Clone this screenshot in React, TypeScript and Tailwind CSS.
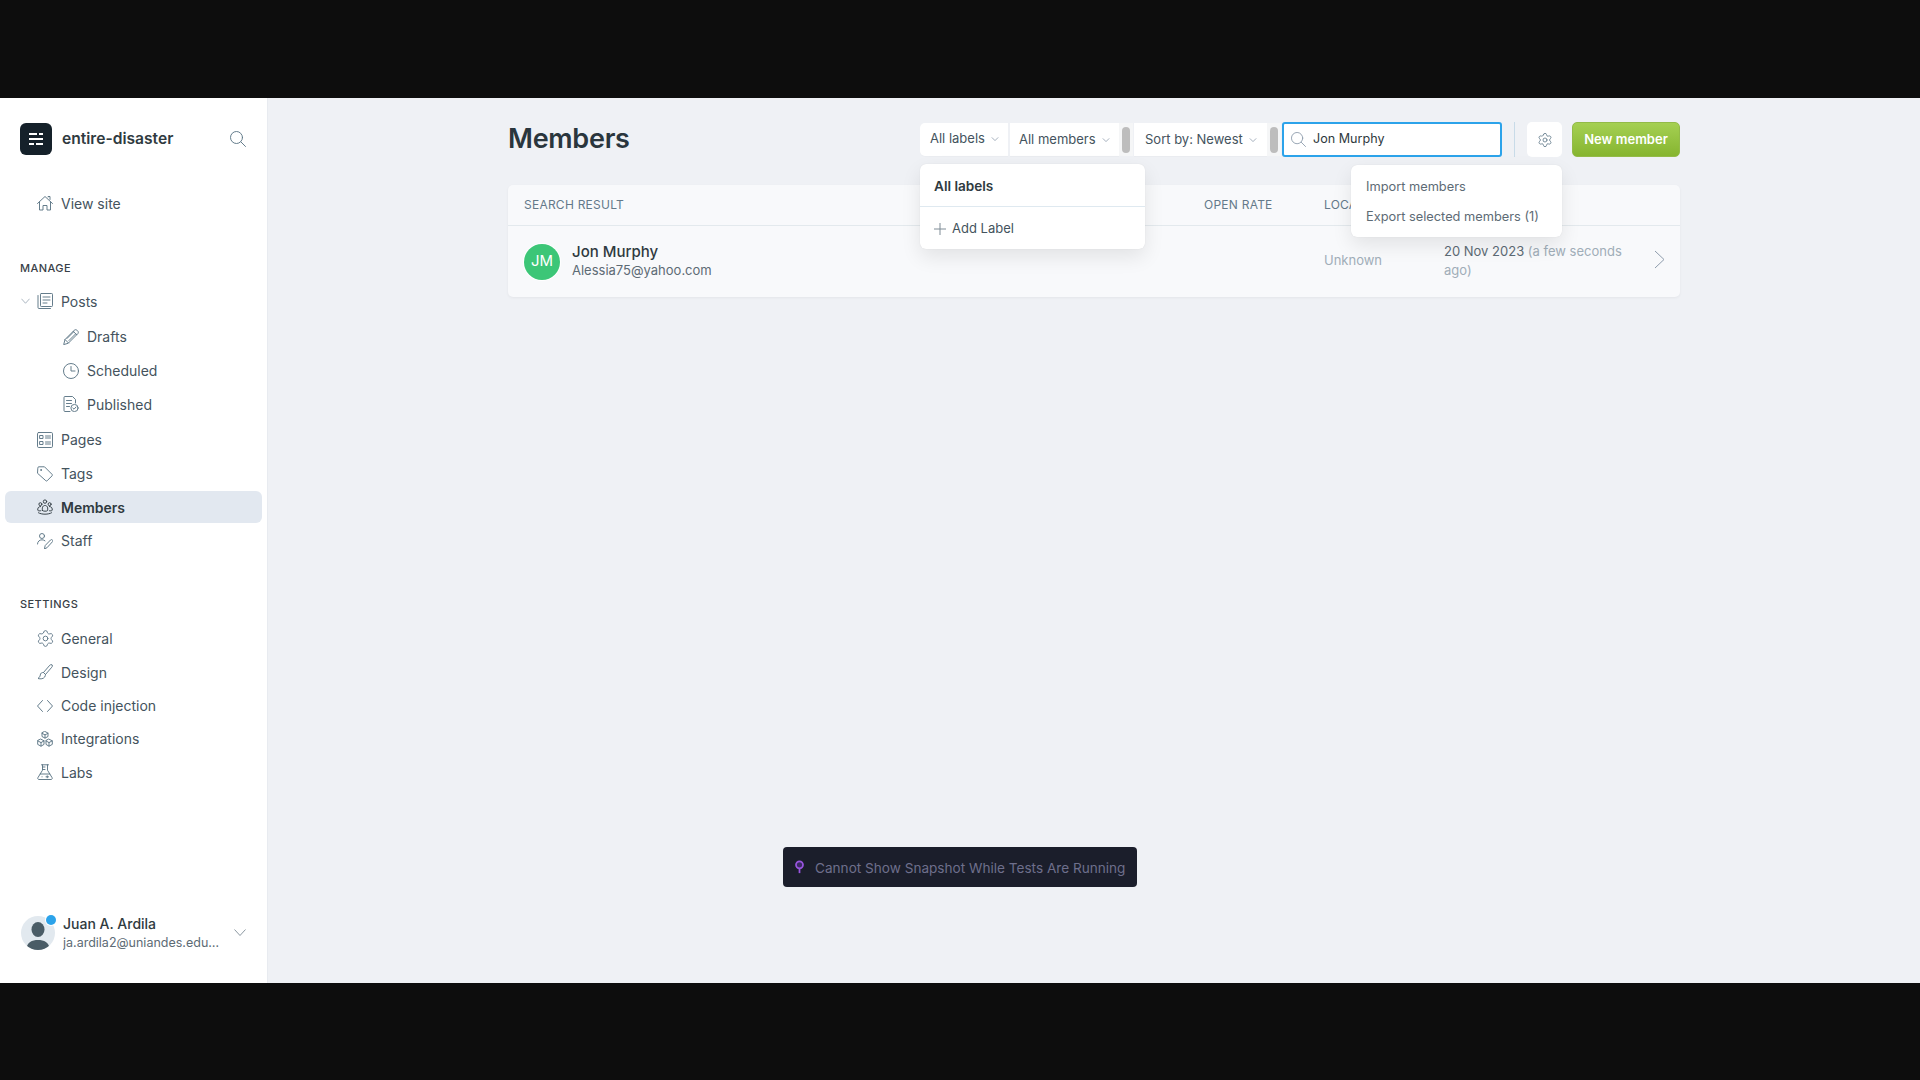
import { useState } from "react";
import { Settings } from "lucide-react";

const font = { fontFamily: "Inter, 'Noto Sans', sans-serif" };

const ic = "h-4 w-4 shrink-0 text-[#5d7686]";

function Icon({ children, className = ic }: { children: React.ReactNode; className?: string }) {
  return (
    <svg viewBox="0 0 16 16" fill="none" stroke="currentColor" strokeWidth="0.95" strokeLinecap="round" strokeLinejoin="round" className={className}>
      {children}
    </svg>
  );
}

function SearchIcon({ className }: { className: string }) {
  return (
    <Icon className={className}>
      <circle cx="6.500" cy="6.500" r="6" />
      <path d="M11 11l4.500 4.500" />
    </Icon>
  );
}

function Caret() {
  return (
    <svg viewBox="0 0 10 10" fill="none" stroke="currentColor" strokeWidth="1" className="h-[8px] w-[8px] text-[#8e9cac]">
      <path d="M1 3l4 4 4-4" />
    </svg>
  );
}

const HomeIcon = () => (
  <Icon>
    <path d="M.5 8.500L8 1.500l7.500 7M2.500 7v8h3.500v-4.500h4V15h3.500V7M11 2V1.500h2v3" />
  </Icon>
);
const PostsIcon = () => (
  <Icon>
    <rect x="3.500" y="0.500" width="12" height="13" rx="0.800" />
    <path d="M1 2.500v12a1 1 0 0 0 1 1h11.500M6 4h7M6 7h7M6 10h4" />
  </Icon>
);
const DraftsIcon = () => (
  <Icon>
    <path d="M.8 15.200l1.200-4.700L11.300 1.200c.7-.7 1.900-.7 2.600 0l.9.9c.7.7.7 1.900 0 2.600L5.500 14z" />
    <path d="M2 10.500L5.500 14M10.200 2.300l3.500 3.500M4 9.500l6.500-6.500M6 11.500L12.500 5" />
  </Icon>
);
const ClockIcon = () => (
  <Icon>
    <circle cx="8" cy="8" r="7.500" />
    <path d="M8 3.500V8h4" />
  </Icon>
);
const PublishedIcon = () => (
  <Icon>
    <path d="M7 15.500H2a1 1 0 0 1-1-1v-13a1 1 0 0 1 1-1h7.500L12.500 3.500V7" />
    <path d="M3.500 4.500h5M3.500 7.500h5M3.500 10.500h3" />
    <circle cx="11.500" cy="12" r="3.600" />
    <path d="M9.800 12l1.200 1.200 2-2.200" />
  </Icon>
);
const PagesIcon = () => (
  <Icon>
    <rect x="0.500" y="0.500" width="15" height="15" rx="1.200" />
    <rect x="3" y="3.500" width="3" height="3" />
    <rect x="3" y="9.500" width="3" height="3" />
    <path d="M8.500 4h5M8.500 6h5M8.500 10h5M8.500 12h5" />
  </Icon>
);
const TagIcon = () => (
  <Icon>
    <path d="M.8 1.800a1 1 0 0 1 1-1h5.700l7.600 7.600a1 1 0 0 1 0 1.400l-4.900 4.900a1 1 0 0 1-1.400 0L.8 7.500z" />
    <circle cx="4" cy="4" r="0.500" />
  </Icon>
);
const MembersIcon = () => (
  <Icon className="h-4 w-4 shrink-0 text-[#2f3a40]">
    <circle cx="8" cy="2.600" r="1.700" />
    <circle cx="3.400" cy="5.200" r="1.500" />
    <circle cx="12.600" cy="5.200" r="1.500" />
    <path d="M5.400 11.500c-.6-4 1-5 2.600-5s3.200 1 2.600 5c-.8 1-4.400 1-5.200 0z" />
    <path d="M3.600 7.500c-2.300 0-3.100 1.800-2.800 3.800.5.600 1.700.700 2.700.500M12.400 7.500c2.300 0 3.100 1.800 2.800 3.800-.5.600-1.700.700-2.700.500" />
    <path d="M1.500 13.800c3 1.900 10 1.900 13 0" />
  </Icon>
);
const StaffIcon = () => (
  <Icon>
    <circle cx="5" cy="3" r="2.500" />
    <path d="M.5 11c0-2.500 2-4.200 4.500-4.200 1.200 0 2.300.4 3 1" />
    <path d="M7.500 15.500l.7-3 5.300-5.500c.6-.6 1.500-.6 2 0s.4 1.300-.1 1.800l-5.200 5.700z" />
  </Icon>
);
const DesignIcon = () => (
  <Icon>
    <path d="M15 1c-.8-.6-1.500-.4-2.200.2L6.500 8.500l2 2 6.300-7.300c.7-.8.8-1.500.2-2.200z" />
    <path d="M6.500 8.500c-2-.3-3 .8-3.200 2.500-.2 1.500-1 2.500-2.300 3.500 2.500.8 5.500.3 6.700-1.500.6-1 .8-2 .8-2.500" />
  </Icon>
);
const CodeIcon = () => (
  <Icon>
    <path d="M5.500 2.500L.5 8l5 5.500M10.500 2.500l5 5.500-5 5.500" />
  </Icon>
);
const IntegrationsIcon = () => (
  <Icon>
    <path d="M8 .5l3 1.600v3.400l-3 1.600-3-1.600V2.100zM4 8.200l3 1.600v3.600l-3 1.800-3.300-1.800V9.800zM12 8.200l3.300 1.600v3.600L12 15.200l-3-1.800V9.800z" />
    <path d="M5 2.300l3 1.600 3-1.600M8 3.900v3.200M.9 9.900L4 11.600l3-1.700M4 11.600v3.400M9 9.900l3 1.700 3.100-1.700M12 11.600v3.400" />
  </Icon>
);
const LabsIcon = () => (
  <Icon>
    <path d="M4.500.8h7M5.500.8v5.400L.9 13.700a1.200 1.200 0 0 0 1 1.800h12.200a1.200 1.200 0 0 0 1-1.800l-4.600-7.500V.8" />
    <path d="M5.500 3h2.500M5.500 5.500h2.500M3.200 10h9.600M5 12.800h.1M9 12.800h2.500M10.250 11.800v2" />
  </Icon>
);

function NavItem({ icon, label, sub, active }: { icon: React.ReactNode; label: string; sub?: boolean; active?: boolean }) {
  return (
    <a
      className={`mx-[5px] flex h-[32px] items-center gap-[8px] rounded-md text-[14px] ${sub ? "pl-[58px]" : "pl-[32px]"} ${
        active ? "bg-[#e2e8f0] font-semibold text-[#2f3a40]" : "text-[#44535d]"
      }`}
    >
      {icon}
      <span>{label}</span>
    </a>
  );
}

function Sidebar() {
  return (
    <aside className="flex w-[268px] shrink-0 flex-col border-r border-[#e8ebf0] bg-white">
      <div className="flex items-center pt-[25px] pl-[20px] pr-[21px]">
        <div className="flex h-[32px] w-[32px] items-center justify-center rounded-md bg-[#15212a]">
          <svg viewBox="0 0 16 16" className="h-[16px] w-[16px]" fill="#fff">
            <rect x="1" y="2" width="8" height="2" />
            <rect x="11" y="2" width="4" height="2" />
            <rect x="1" y="7" width="14" height="2" />
            <rect x="1" y="12" width="5" height="2" />
            <rect x="8" y="12" width="7" height="2" />
          </svg>
        </div>
        <span className="ml-[10px] text-[15.600px] font-semibold text-[#2f3a40]">entire-disaster</span>
        <SearchIcon className="ml-auto h-[16px] w-[16px] text-[#5d7686]" />
      </div>

      <div className="mt-[32px]">
        <NavItem icon={<HomeIcon />} label="View site" />
      </div>

      <div className="mt-[42px] pl-[20px] text-[11px] font-medium leading-[14px] tracking-[0.04em] text-[#394047]">MANAGE</div>
      <nav className="relative mt-[10px] flex flex-col gap-[1.600px]">
        <svg viewBox="0 0 10 6" fill="none" stroke="currentColor" strokeWidth="0.8" className="absolute top-[13px] left-[21px] h-[6px] w-[9px] text-[#8e9cac]">
          <path d="M.5.500L5 5.500 9.500.500" />
        </svg>
        <NavItem icon={<PostsIcon />} label="Posts" />
        <div className="mt-[2.400px] mb-[2.200px] flex flex-col gap-[1.600px]">
          <NavItem sub icon={<DraftsIcon />} label="Drafts" />
          <NavItem sub icon={<ClockIcon />} label="Scheduled" />
          <NavItem sub icon={<PublishedIcon />} label="Published" />
        </div>
        <NavItem icon={<PagesIcon />} label="Pages" />
        <NavItem icon={<TagIcon />} label="Tags" />
        <NavItem active icon={<MembersIcon />} label="Members" />
        <NavItem icon={<StaffIcon />} label="Staff" />
      </nav>

      <div className="mt-[40px] pl-[20px] text-[11px] font-medium leading-[14px] tracking-[0.04em] text-[#394047]">SETTINGS</div>
      <nav className="mt-[12px] flex flex-col gap-[1.400px]">
        <NavItem icon={<Settings className="-m-[1.500px] h-[19px] w-[19px] shrink-0 text-[#5d7686]" strokeWidth={1.150} />} label="General" />
        <NavItem icon={<DesignIcon />} label="Design" />
        <NavItem icon={<CodeIcon />} label="Code injection" />
        <NavItem icon={<IntegrationsIcon />} label="Integrations" />
        <NavItem icon={<LabsIcon />} label="Labs" />
      </nav>

      <div className="mt-auto mb-[31px] flex items-center pl-[21px] pr-[21px]">
        <div className="relative h-[34px] w-[34px] shrink-0">
          <div className="h-[34px] w-[34px] overflow-hidden rounded-full bg-[#e2e9ef]">
            <svg viewBox="0 0 34 34" className="h-full w-full" fill="#4a5c66">
              <ellipse cx="17" cy="13.500" rx="6.500" ry="7.500" />
              <path d="M5 34c1-8 6-10 12-10s11 2 12 10z" />
            </svg>
          </div>
          <span className="absolute -top-[1px] -right-[1px] h-[10px] w-[10px] rounded-full bg-[#2ca3ea] ring-1 ring-white" />
        </div>
        <div className="ml-[8px] w-[159px] pt-[2px]">
          <div className="text-[14px] leading-[18px] font-medium text-[#2f3a40]">Juan A. Ardila</div>
          <div className="truncate pt-[1px] text-[12.500px] leading-[18px] text-[#5d6b75]">ja.ardila2@uniandes.edu.co</div>
        </div>
        <svg viewBox="0 0 12 7" fill="none" stroke="currentColor" strokeWidth="0.9" className="ml-auto h-[7px] w-[12px] text-[#7f8c96]">
          <path d="M.5.500L6 6.500 11.500.500" />
        </svg>
      </div>
    </aside>
  );
}

function Toolbar() {
  const [query, setQuery] = useState("Jon Murphy");
  const filter = "flex h-[33px] items-center gap-[6px] bg-white text-[13px] text-[#44535d] shadow-[0_1px_1px_rgba(0,0,0,0.02)]";
  const scrollbar = (
    <div className="flex h-[33px] w-[14px] items-center justify-center bg-[#f5f6f7]">
      <div className="h-[26px] w-[8px] rounded-[4px] bg-[#bdbdbd]" />
    </div>
  );
  return (
    <header className="flex h-[35px] items-center justify-between">
      <h1 className="pb-[2px] text-[27px] leading-none font-semibold tracking-[-0.01em] text-[#2a363d]">Members</h1>
      <div className="relative flex items-center">
        <div className={`${filter} w-[88px] rounded-l-[5px] pb-[2px] pl-[10px]`}>
          All labels
          <Caret />
        </div>
        <div className={`${filter} ml-[2px] w-[109px] pl-[9px]`}>
          All members
          <Caret />
        </div>
        {scrollbar}
        <div className={`${filter} ml-[1px] w-[133px] pl-[11px]`}>
          Sort by: Newest
          <Caret />
        </div>
        {scrollbar}
        <div className="ml-[1px] flex h-[35px] w-[220px] items-center rounded-[3px] border-2 border-[#2ca3ea] bg-white pl-[7px]">
          <SearchIcon className="h-[15px] w-[15px] text-[#8e9cac]" />
          <input
            value={query}
            onChange={(e) => setQuery(e.target.value)}
            className="ml-[7px] min-w-0 flex-1 bg-transparent text-[12.600px] text-[#2f3a40] outline-none"
          />
        </div>
        <div className="mx-[12px] h-[35px] w-px bg-[#c8dbe8]" />
        <button className="flex h-[35px] w-[35px] items-center justify-center rounded-[5px] bg-white">
          <Settings className="h-[16px] w-[16px] text-[#5d7686]" strokeWidth={1.200} />
        </button>
        <button className="ml-[10px] h-[35px] w-[108px] rounded-[5px] border border-[#93bb48] bg-gradient-to-b from-[#a5d052] to-[#86b52f] text-[13px] font-semibold text-white">
          New member
        </button>

        <div className="absolute top-[42px] left-0 w-[225px] rounded-[6px] bg-white text-[13px] shadow-[0_8px_20px_rgba(0,0,0,0.09),0_0_1px_rgba(0,0,0,0.12)]">
          <div className="flex h-[43px] items-center border-b border-[#dfe9f0] pt-[2px] pl-[14px] text-[13.600px] font-semibold text-[#2f3a40]">All labels</div>
          <div className="flex h-[42px] items-center gap-[6px] pt-[2px] pl-[14px] text-[#44535d]">
            <svg viewBox="0 0 12 12" fill="none" stroke="currentColor" strokeWidth="1" className="h-[12px] w-[12px] text-[#7f8c96]">
              <path d="M6 0v12M0 6h12" />
            </svg>
            Add Label
          </div>
        </div>

        <div className="absolute top-[43px] left-[431px] h-[72px] w-[211px] rounded-[6px] bg-white pt-[7px] pl-[15px] text-[12.800px] text-[#5d6b75] shadow-[0_8px_20px_rgba(0,0,0,0.09),0_0_1px_rgba(0,0,0,0.12)]">
          <div className="flex h-[30px] items-center">Import members</div>
          <div className="flex h-[30px] items-center">Export selected members (1)</div>
        </div>
      </div>
    </header>
  );
}

function MembersTable() {
  return (
    <section className="mt-[28px] overflow-hidden rounded-[5px] bg-[#f8f9fb] shadow-[0_1px_3px_rgba(0,0,0,0.05)]">
      <div className="grid h-[41px] grid-cols-[680px_120px_120px_1fr] items-center border-b border-[#e3e9ed] pl-[16px] text-[12px] tracking-[0.02em] text-[#64798a]">
        <span>SEARCH RESULT</span>
        <span>OPEN RATE</span>
        <span>LOCATION</span>
        <span />
      </div>
      <div className="grid h-[71px] grid-cols-[680px_120px_120px_1fr] items-center pl-[16px]">
        <div className="flex items-center">
          <div className="flex h-[36px] w-[36px] items-center justify-center rounded-full bg-[#3cc677] text-[15px] text-white ring-1 ring-white">JM</div>
          <div className="ml-[12px] pb-[2px]">
            <div className="text-[15px] leading-[19px] font-medium text-[#2f3a40]">Jon Murphy</div>
            <div className="text-[13px] leading-[18px] text-[#5d6b75]">Alessia75@yahoo.com</div>
          </div>
        </div>
        <span />
        <span className="pb-[2px] text-[13px] text-[#a0adb8]">Unknown</span>
        <div className="flex items-center pr-[15px]">
          <div className="w-[190px] pb-[2px] text-[13px] leading-[19px] text-[#5d6b75]">
            20 Nov 2023 <span className="text-[#a0adb8]">(a few seconds ago)</span>
          </div>
          <svg viewBox="0 0 11 19" fill="none" stroke="currentColor" strokeWidth="1" className="mb-[4px] ml-auto h-[19px] w-[11px] text-[#8e9cac]">
            <path d="M1 1l9 8.500L1 18" />
          </svg>
        </div>
      </div>
    </section>
  );
}

export default function App() {
  return (
    <div className="flex h-screen flex-col bg-[#0d0d0d]" style={font}>
      <div className="h-[98px] shrink-0" />
      <div className="flex h-[885px] shrink-0">
        <Sidebar />
        <main className="relative flex-1 bg-[#eff1f5] pt-[24px] pl-[240px] pr-[240px]">
          <Toolbar />
          <MembersTable />
          <div className="absolute top-[749px] left-[515px] flex h-[40px] w-[354px] items-center rounded-[4px] bg-[#1b1e2b] pl-[11px] text-[13.600px] text-[#6e6f8c]">
            <svg viewBox="0 0 12 16" className="h-[14px] w-[11px]">
              <circle cx="6" cy="5.500" r="4" fill="#3b2a63" stroke="#9a55e0" strokeWidth="2" />
              <path d="M6 9.500V15" stroke="#9a55e0" strokeWidth="2" />
            </svg>
            <span className="ml-[10px] pt-[2px]">Cannot Show Snapshot While Tests Are Running</span>
          </div>
        </main>
      </div>
    </div>
  );
}
